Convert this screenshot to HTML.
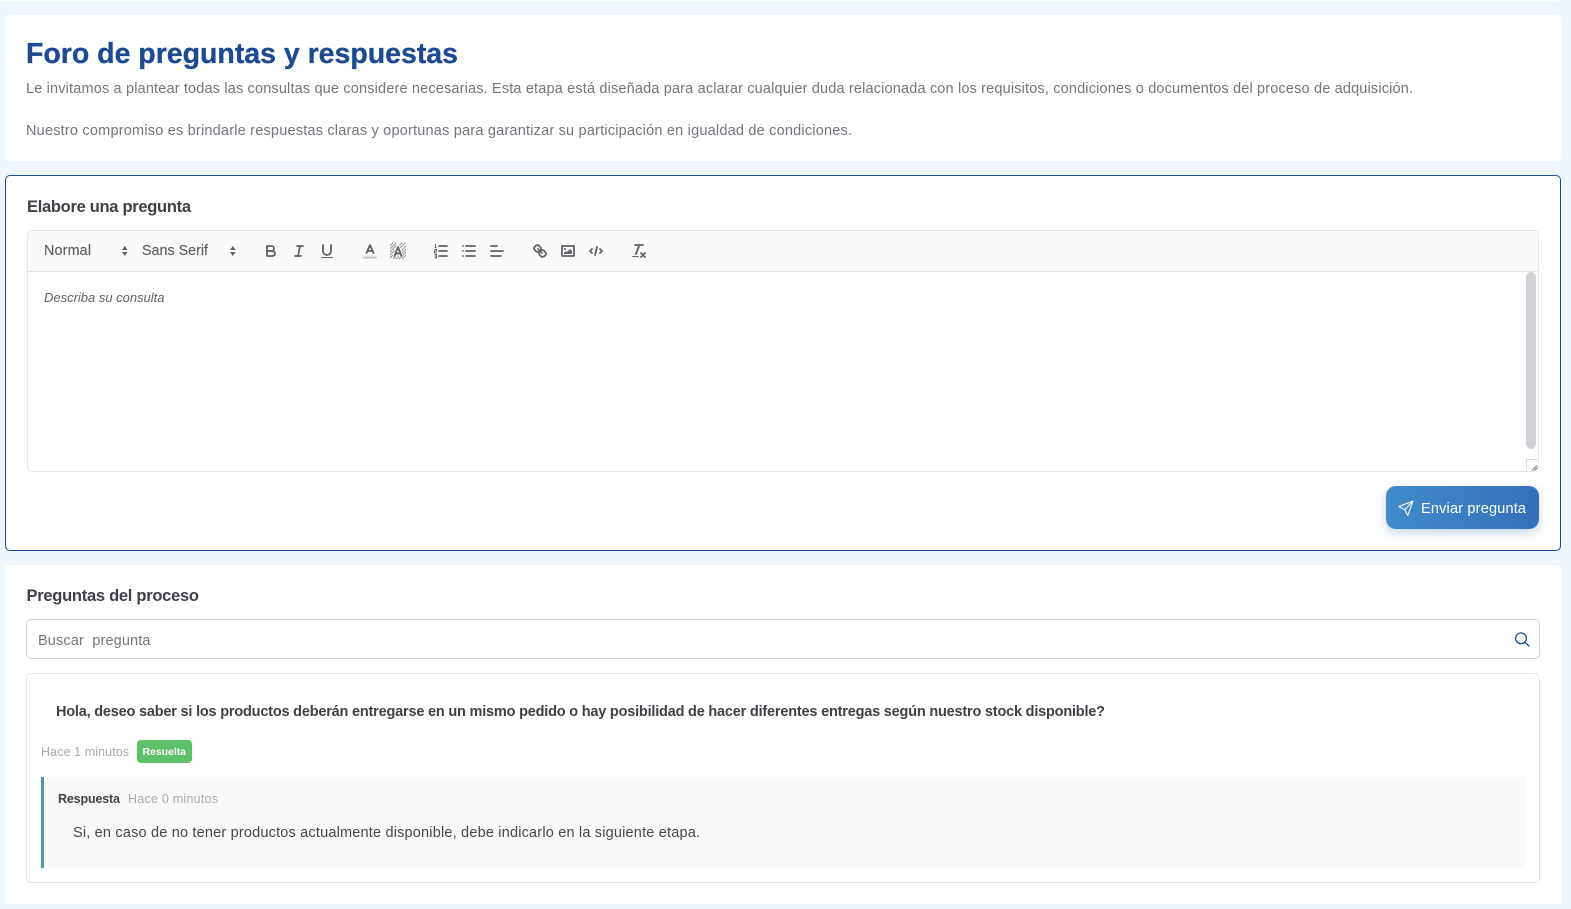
<!DOCTYPE html>
<html lang="es">
<head>
<meta charset="utf-8">
<title>Foro de preguntas y respuestas</title>
<style>
html,body{margin:0;padding:0;width:1571px;height:909px;overflow:hidden;background:#f0f6fe;font-family:"Liberation Sans",sans-serif}
.b{position:absolute;box-sizing:border-box}
svg.t{position:absolute;left:0;top:0}
svg.t text{font-family:"Liberation Sans",sans-serif;white-space:pre}
.ic{fill:none;stroke:#606268;stroke-width:1.8;stroke-linecap:round;stroke-linejoin:round}
.fl{fill:#606268;stroke:none}
</style>
</head>
<body>
<div class="b" style="left:0;top:0;width:1558px;height:1px;background:#fdfeff"></div>
<div class="b" style="left:5px;top:15px;width:1556px;height:146px;background:#fff;border-radius:5px"></div>
<div class="b" style="left:5px;top:175px;width:1556px;height:376px;background:#fff;border:1px solid #1e4a94;border-radius:5px"></div>
<div class="b" style="left:5px;top:565px;width:1556px;height:339px;background:#fff"></div>

<div class="b" style="left:27px;top:230px;width:1512px;height:42px;background:#fafafa;border:1px solid #e6e6e8;border-radius:5px 5px 0 0"></div>
<div class="b" style="left:27px;top:271px;width:1512px;height:201px;background:#fff;border:1px solid #e6e6e8;border-radius:0 0 5px 5px"></div>
<div class="b" style="left:1526px;top:272px;width:10px;height:177px;background:#d1d1d6;border-radius:5px"></div>
<div class="b" style="left:1526px;top:459px;width:12px;height:12px;background:#fff;border-left:1px solid #dcdcdc;border-top:1px solid #dcdcdc"></div>

<div class="b" style="left:1386px;top:486px;width:153px;height:43px;border-radius:10px;background:linear-gradient(90deg,#3f8ccb,#3570bb);box-shadow:0 4px 10px rgba(53,100,180,.28)"></div>

<div class="b" style="left:26px;top:619px;width:1514px;height:40px;background:#fff;border:1px solid #d2d2d5;border-radius:5px"></div>
<div class="b" style="left:26px;top:673px;width:1514px;height:210px;background:#fff;border:1px solid #e3e3e5;border-radius:5px"></div>
<div class="b" style="left:137px;top:740px;width:55px;height:23px;background:#5cc26a;border-radius:4px"></div>
<div class="b" style="left:41px;top:777px;width:1484px;height:91px;background:#f9f9f9;border-left:3px solid #4797b5"></div>

<svg class="t" width="1571" height="909" viewBox="0 0 1571 909" xmlns="http://www.w3.org/2000/svg">
<text x="26" y="63" font-size="28.500" font-weight="700" fill="#1c4a93" stroke="#1c4a93" stroke-width=".3" textLength="432" lengthAdjust="spacing">Foro de preguntas y respuestas</text>
<text x="26" y="93" font-size="14.500" fill="#73757c" textLength="1387" lengthAdjust="spacing">Le invitamos a plantear todas las consultas que considere necesarias. Esta etapa está diseñada para aclarar cualquier duda relacionada con los requisitos, condiciones o documentos del proceso de adquisición.</text>
<text x="26" y="135" font-size="14.500" fill="#73757c" textLength="826" lengthAdjust="spacing">Nuestro compromiso es brindarle respuestas claras y oportunas para garantizar su participación en igualdad de condiciones.</text>

<text x="27" y="212" font-size="16.500" font-weight="700" fill="#3f4147" textLength="164" lengthAdjust="spacing">Elabore una pregunta</text>
<text x="44" y="255" font-size="14.300" fill="#5c5e64" stroke="#5c5e64" stroke-width=".15" textLength="47" lengthAdjust="spacing">Normal</text>
<text x="142" y="255" font-size="14.300" fill="#5c5e64" stroke="#5c5e64" stroke-width=".15" textLength="66" lengthAdjust="spacing">Sans Serif</text>
<path class="fl" d="M122 250l2.800-4 2.800 4zM122 252l2.800 4 2.800-4zM230 250l2.800-4 2.800 4zM230 252l2.800 4 2.800-4z"/>
<text x="44" y="302" font-size="13" font-style="italic" fill="#5f6166" textLength="120.500" lengthAdjust="spacing">Describa su consulta</text>

<g transform="translate(262 242)"><path class="ic" d="M5,4H9.500A2.500,2.500,0,0,1,12,6.500v0A2.500,2.500,0,0,1,9.500,9H5V4Z"/><path class="ic" d="M5,9h5.500A2.500,2.500,0,0,1,13,11.500v0A2.500,2.500,0,0,1,10.500,14H5V9Z"/></g>
<g transform="translate(290 242)" class="ic"><path d="M7 4H13M5 14H11M8 14L10 4"/></g>
<g transform="translate(318 242)"><path class="ic" d="M5,3V9a4,4,0,0,0,4,4h0a4,4,0,0,0,4-4V3"/><rect class="fl" x="3" y="15" width="12" height="1" rx=".5"/></g>
<g transform="translate(361 242)"><path d="M3 15.500H15" fill="none" stroke="#c8c8cc" stroke-width="2" stroke-linecap="round"/><path class="ic" d="M5.500 11L9 3l3.500 8M11.630 9H6.380"/></g>
<g transform="translate(389 242)"><rect x="1" y="1" width="16" height="16" fill="#fafafa"/><path d="M1 4L4 1M1 7L7 1M1 10L10 1M1 13L13 1M1 16L16 1M4 17L17 4M7 17L17 7M10 17L17 10M13 17L17 13" stroke="#8f9095" stroke-width="1"/><path d="M5.500 14.500L9 5l3.500 9.500M11.600 11.500H6.400" fill="none" stroke="#fafafa" stroke-width="4"/><path class="ic" d="M5.500 14L9 5l3.500 9M11.600 11.500H6.400"/></g>
<g transform="translate(432 242)"><path class="ic" d="M7 4H15M7 9H15M7 14H15"/><path d="M3.500 2v3.500M2.600 5.700H4.400M2.500 7.500H4.500V9H2.500V10.700H4.500M2.500 12.400H4.500V15.800H2.500M2.800 14H4.300" fill="none" stroke="#606268" stroke-width="1"/></g>
<g transform="translate(460 242)" class="ic"><path d="M6 4H15M6 9H15M6 14H15M3 4H3.010M3 9H3.010M3 14H3.010"/></g>
<g transform="translate(488 242)" class="ic"><path d="M3 4H9M3 9H15M3 14H13"/></g>
<g transform="translate(531 242)" class="ic"><path d="M7 7L11 11"/><path d="M8.900,4.577a3.476,3.476,0,0,1,.36,4.679A3.476,3.476,0,0,1,4.577,8.900C3.185,7.500,2.035,6.400,4.217,4.217S7.500,3.185,8.900,4.577Z"/><path d="M13.423,9.100a3.476,3.476,0,0,0-4.679-.36,3.476,3.476,0,0,0,.36,4.679c1.392,1.392,2.500,2.542,4.679.36S14.815,10.500,13.423,9.100Z"/></g>
<g transform="translate(559 242)"><rect class="ic" x="3" y="4" width="12" height="10"/><circle class="fl" cx="6" cy="7" r="1"/><path class="fl" d="M5 12V11L7 9 8 10 11 7 13 9V12Z"/></g>
<g transform="translate(587 242)" class="ic"><path d="M5 7L3 9 5 11M13 7L15 9 13 11M10 5L8 13"/></g>
<g transform="translate(630 242)"><path class="ic" d="M5 3H13M6 12L9.350 3M11 11L15 15M15 11L11 15"/><rect class="fl" x="2" y="14" width="7" height="1" rx=".5"/></g>

<path d="M1532 470.500L1537 465.500M1534.500 470.500L1537.500 467.500" stroke="#777" stroke-width="1" fill="none"/>

<path d="M1413 501L1399 506.500L1404.800 509.700L1407.800 515.500ZM1413 501L1404.800 509.700" fill="none" stroke="#fff" stroke-width="1.050" stroke-linejoin="round" stroke-linecap="round"/>
<text x="1421" y="513" font-size="14.500" fill="#fff" textLength="105" lengthAdjust="spacing">Enviar pregunta</text>

<text x="26.500" y="601" font-size="16.500" font-weight="700" fill="#3f4147" textLength="172.500" lengthAdjust="spacing">Preguntas del proceso</text>
<text x="38" y="645" font-size="14.500" fill="#75777d" textLength="112.500" lengthAdjust="spacing">Buscar  pregunta</text>
<circle cx="1521" cy="638.300" r="5.400" fill="none" stroke="#1e4a94" stroke-width="1.300"/>
<path d="M1525 642.500L1529 646" stroke="#1e4a94" stroke-width="1.300" stroke-linecap="round"/>

<text x="56" y="716" font-size="14.500" font-weight="700" fill="#3f4147" textLength="1049" lengthAdjust="spacing">Hola, deseo saber si los productos deberán entregarse en un mismo pedido o hay posibilidad de hacer diferentes entregas según nuestro stock disponible?</text>
<text x="41" y="756" font-size="12.500" fill="#a9abb0" textLength="88" lengthAdjust="spacing">Hace 1 minutos</text>
<text x="142.500" y="755" font-size="10.500" font-weight="700" fill="#fff" textLength="43.500" lengthAdjust="spacing">Resuelta</text>
<text x="58" y="803" font-size="12.500" font-weight="700" fill="#3f4147" textLength="62" lengthAdjust="spacing">Respuesta</text>
<text x="128" y="803" font-size="12.500" fill="#a9abb0" textLength="90" lengthAdjust="spacing">Hace 0 minutos</text>
<text x="73" y="837" font-size="14.500" fill="#45474c" textLength="627" lengthAdjust="spacing">Si, en caso de no tener productos actualmente disponible, debe indicarlo en la siguiente etapa.</text>
</svg>
</body>
</html>
